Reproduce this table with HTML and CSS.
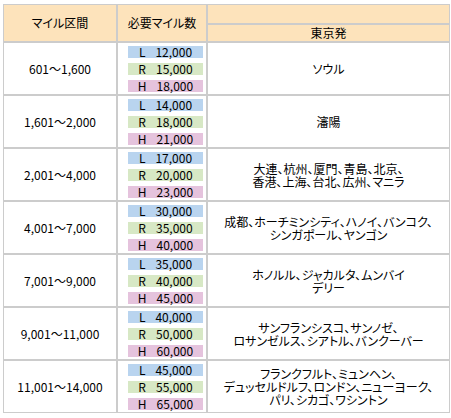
FILE: index.html
```html
<!DOCTYPE html>
<html lang="ja">
<head>
<meta charset="utf-8">
<link rel="stylesheet" href="styles.css">
</head>
<body>
<table class="miles">
  <colgroup>
    <col class="c-range">
    <col class="c-need">
    <col class="c-dest">
  </colgroup>
  <thead>
    <tr>
      <th rowspan="2" class="hd">マイル区間</th>
      <th rowspan="2" class="hd">必要マイル数</th>
      <th class="hd"><div class="hd-top"></div></th>
    </tr>
    <tr>
      <th class="hd"><div class="hd-sub">東京発</div></th>
    </tr>
  </thead>
  <tbody>
    <tr>
      <td class="range">601～1,600</td>
      <td class="need"><div class="bars"><div class="bar l"><span>L</span><span class="num">12,000</span></div><div class="bar r"><span>R</span><span class="num">15,000</span></div><div class="bar h"><span>H</span><span class="num">18,000</span></div></div></td>
      <td class="dest">ソウル</td>
    </tr>
    <tr>
      <td class="range">1,601～2,000</td>
      <td class="need"><div class="bars"><div class="bar l"><span>L</span><span class="num">14,000</span></div><div class="bar r"><span>R</span><span class="num">18,000</span></div><div class="bar h"><span>H</span><span class="num">21,000</span></div></div></td>
      <td class="dest">瀋陽</td>
    </tr>
    <tr>
      <td class="range">2,001～4,000</td>
      <td class="need"><div class="bars"><div class="bar l"><span>L</span><span class="num">17,000</span></div><div class="bar r"><span>R</span><span class="num">20,000</span></div><div class="bar h"><span>H</span><span class="num">23,000</span></div></div></td>
      <td class="dest">大連、杭州、厦門、青島、北京、<br>香港、上海、台北、広州、マニラ</td>
    </tr>
    <tr>
      <td class="range">4,001～7,000</td>
      <td class="need"><div class="bars"><div class="bar l"><span>L</span><span class="num">30,000</span></div><div class="bar r"><span>R</span><span class="num">35,000</span></div><div class="bar h"><span>H</span><span class="num">40,000</span></div></div></td>
      <td class="dest">成都、ホーチミンシティ、ハノイ、バンコク、<br>シンガポール、ヤンゴン</td>
    </tr>
    <tr>
      <td class="range">7,001～9,000</td>
      <td class="need"><div class="bars"><div class="bar l"><span>L</span><span class="num">35,000</span></div><div class="bar r"><span>R</span><span class="num">40,000</span></div><div class="bar h"><span>H</span><span class="num">45,000</span></div></div></td>
      <td class="dest">ホノルル、ジャカルタ、ムンバイ<br>デリー</td>
    </tr>
    <tr>
      <td class="range">9,001～11,000</td>
      <td class="need"><div class="bars"><div class="bar l"><span>L</span><span class="num">40,000</span></div><div class="bar r"><span>R</span><span class="num">50,000</span></div><div class="bar h"><span>H</span><span class="num">60,000</span></div></div></td>
      <td class="dest">サンフランシスコ、サンノゼ、<br>ロサンゼルス、シアトル、バンクーバー</td>
    </tr>
    <tr>
      <td class="range">11,001～14,000</td>
      <td class="need"><div class="bars"><div class="bar l"><span>L</span><span class="num">45,000</span></div><div class="bar r"><span>R</span><span class="num">55,000</span></div><div class="bar h"><span>H</span><span class="num">65,000</span></div></div></td>
      <td class="dest">フランクフルト、ミュンヘン、<br>デュッセルドルフ、ロンドン、ニューヨーク、<br>パリ、シカゴ、ワシントン</td>
    </tr>
  </tbody>
</table>
</body>
</html>
```

FILE: styles.css
```css
html, body {
  margin: 0;
  padding: 0;
  background: #ffffff;
}
body {
  padding: 4px 0 0 3px;
  font-family: "Noto Sans CJK JP", "Noto Sans", sans-serif;
  font-size: 12px;
  color: #000000;
  font-feature-settings: "palt";
}
.miles {
  border-collapse: separate;
  border-spacing: 0;
  table-layout: fixed;
  width: 447px;
}
.c-range { width: 114px; }
.c-need { width: 90px; }
.c-dest { width: 243px; }
.miles th,
.miles td {
  border: 1px solid #cccccc;
  padding: 0;
  text-align: center;
  vertical-align: middle;
  font-weight: normal;
  line-height: 12px;
}
.hd {
  background: #fde3bb;
}
.hd-top {
  height: 18px;
}
.hd-sub {
  height: 16px;
  line-height: 16px;
}
.bars {
  height: 51px;
  display: flex;
  flex-direction: column;
  justify-content: center;
  gap: 5px;
  padding-left: 10px;
}
.bar {
  width: 75px;
  height: 12px;
  line-height: 12px;
  display: flex;
  justify-content: center;
  gap: 10px;
}
.bar.l { background: #b9d4ef; }
.bar.r { background: #d7e8c5; }
.bar.h { background: #e5c3dd; }
.miles td.dest {
  line-height: 13px;
}
```
